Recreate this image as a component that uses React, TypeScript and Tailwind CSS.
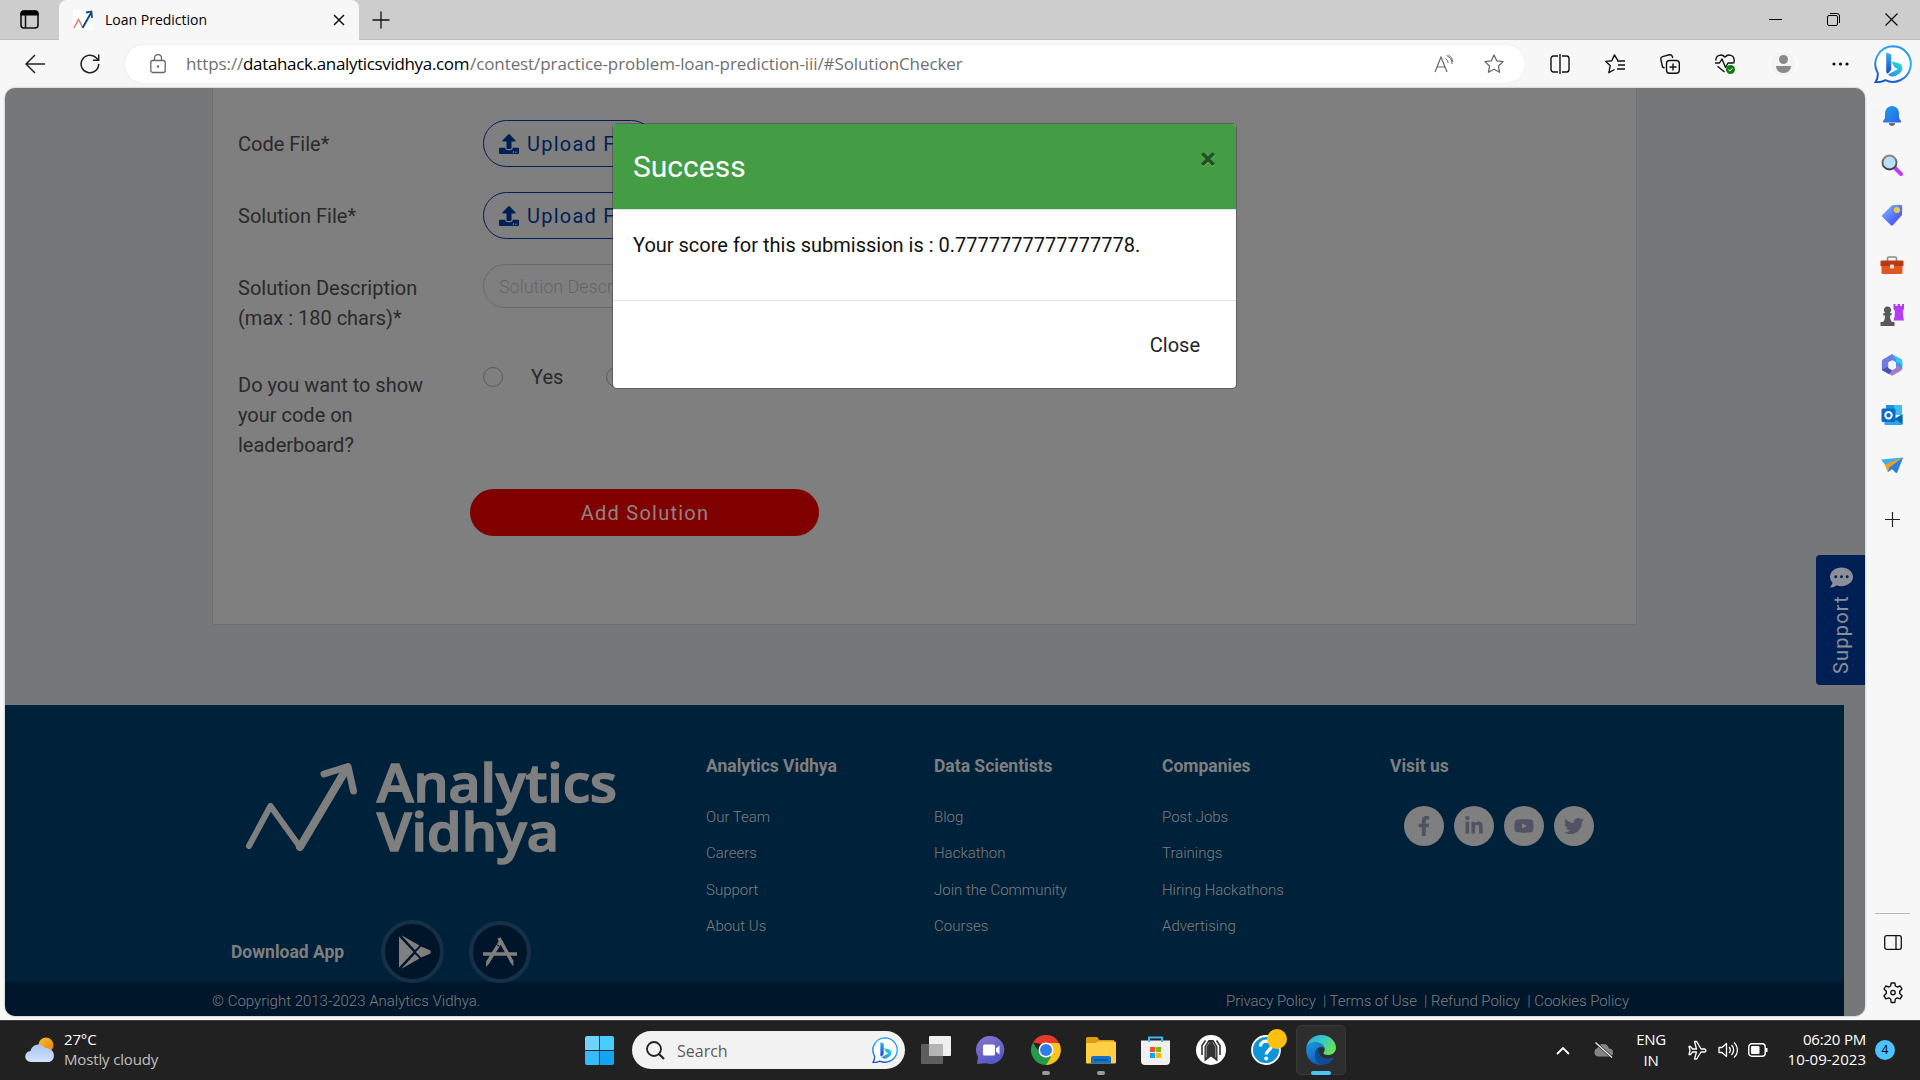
import React from "react";
import {
  FaFacebookF,
  FaLinkedinIn,
  FaTwitter,
  FaUpload,
  FaYoutube,
  FaCommentDots,
} from "react-icons/fa";

type SvgProps = {
  w?: number;
  h?: number;
  box?: string;
  className?: string;
  children: React.ReactNode;
};

function Svg({ w = 20, h = 20, box = "0 0 20 20", className = "", children }: SvgProps) {
  return (
    <svg width={w} height={h} viewBox={box} className={`block shrink-0 ${className}`} fill="none">
      {children}
    </svg>
  );
}

function BingMark({ size, id }: { size: number; id: string }) {
  return (
    <Svg w={size} h={size} box="0 0 38 38">
      <defs>
        <linearGradient id={id + "r"} x1="0.7" y1="0" x2="0.3" y2="1">
          <stop offset="0" stopColor="#2f8df0" />
          <stop offset="0.35" stopColor="#27b6ee" />
          <stop offset="1" stopColor="#1b4fd0" />
        </linearGradient>
        <linearGradient id={id + "b"} x1="0" y1="0" x2="0" y2="1">
          <stop offset="0" stopColor="#35b0f5" />
          <stop offset="1" stopColor="#1a47d2" />
        </linearGradient>
        <linearGradient id={id + "c"} x1="0" y1="1" x2="1" y2="0">
          <stop offset="0" stopColor="#2f86f0" />
          <stop offset="1" stopColor="#25e0d0" />
        </linearGradient>
      </defs>
      <path
        d="M19 1.2a17.8 17.8 0 1 1-7.6 33.9c-3.2 1.7-6.400 2.300-9.800 2 1.900-3.200 2.600-6.300 2.100-9.300A17.800 17.800 0 0 1 19 1.200z"
        fill="#fff"
        stroke={`url(#${id}r)`}
        strokeWidth="2"
      />
      <path d="M17.500 16.500l3 5.800 3.300 1.600c-2.200 1.300-7 3.900-9.800 5.800 2.500 2.500 6 2.400 9 .6 2.600-1.600 5.400-3.500 5.400-7.200 0-2.600-1.600-4.300-4-5.100z" fill={`url(#${id}c)`} />
      <path d="M12.200 7.500l4.200 1.600c.6.2.8.6.8 1.200v14.500l-3.300 4c-1.100-.5-1.700-1.400-1.700-2.800z" fill={`url(#${id}b)`} />
    </Svg>
  );
}

function TitleBar() {
  return (
    <header className="flex h-10 shrink-0 bg-[#cdcdcd]">
      <div className="flex w-[59px] items-center border-b border-[#bdbdbd] pl-[20px]">
        <Svg w={19} h={19} box="0 0 19 19">
          <rect x="1" y="1" width="17" height="17" rx="3" stroke="#111" strokeWidth="1.600" />
          <path d="M1 5V3.500A2.500 2.500 0 0 1 3.500 1h12A2.500 2.500 0 0 1 18 3.500V5z" fill="#000" stroke="#000" />
          <path d="M5.500 5v13" stroke="#111" strokeWidth="1.500" />
        </Svg>
      </div>
      <div className="flex w-[300px] items-center rounded-t-lg bg-[#f7f7f7] pr-[14px] pl-[14px]">
        <Svg className="bg-white">
          <path d="M1 18L5.500 9.500 9.500 17" stroke="#e07a5f" strokeWidth="1.500" />
          <path d="M9.500 18L18 3" stroke="#164a80" strokeWidth="2" />
          <path d="M13 2.500L18.500 1.500 19 8" stroke="#164a80" strokeWidth="1.800" />
        </Svg>
        <span className="mb-0.5 ml-3 grow text-[14px] text-black">Loan Prediction</span>
        <Svg w={12} h={12} box="0 0 12 12">
          <path d="M1 1l10 10M11 1L1 11" stroke="#111" strokeWidth="1.500" />
        </Svg>
      </div>
      <div className="flex grow items-center border-b border-[#bdbdbd] pl-[13px]">
        <Svg w={18} h={18} box="0 0 18 18">
          <path d="M9 .5v17M.5 9h17" stroke="#111" strokeWidth="1.300" />
        </Svg>
        <div className="ml-auto flex items-center gap-[45px] pr-[22px]">
          <Svg w={13} h={13} box="0 0 13 13">
            <path d="M0 6.500h13" stroke="#000" />
          </Svg>
          <Svg w={13} h={13} box="0 0 13 13">
            <rect x=".5" y="2.500" width="10" height="10" rx="1.500" stroke="#000" />
            <path d="M3 .5h7a2.500 2.500 0 0 1 2.500 2.500v7" stroke="#000" />
          </Svg>
          <Svg w={13} h={13} box="0 0 13 13">
            <path d="M.5.5l12 12M12.500.5l-12 12" stroke="#000" strokeWidth="1.100" />
          </Svg>
        </div>
      </div>
    </header>
  );
}

function Toolbar() {
  return (
    <div className="flex h-12 shrink-0 items-center">
      <div className="flex w-[125px] gap-[34px] pl-[25px]">
        <Svg>
          <path d="M10 1L1 10l9 9M1 10h19" stroke="#222" strokeWidth="1.500" />
        </Svg>
        <Svg className="ml-px">
          <path d="M18.700 10A8.800 8.800 0 1 1 15.500 3.200L18.500 6M18.700 0.500V6.200H13" stroke="#222" strokeWidth="1.500" />
        </Svg>
      </div>
      <div className="flex h-[38px] w-[1400px] items-center rounded-full bg-white pr-[21px] pl-[25px] shadow-[0_0_3px_rgba(0,0,0,0.08)]">
        <Svg w={16} h={20} box="0 0 16 20">
          <rect x=".8" y="6.500" width="14.400" height="12" rx="2" stroke="#666" strokeWidth="1.300" />
          <path d="M4.500 6.500V4a3.500 3.500 0 0 1 7 0v2.500" stroke="#666" strokeWidth="1.300" />
          <circle cx="8" cy="12.500" r="1.200" fill="#666" />
        </Svg>
        <div className="ml-[20px] flex grow text-[17px] whitespace-nowrap text-[#6f6f6f]">
          <span className="w-[57px] tracking-[-0.1px]">https://</span>
          <span className="w-[227px] tracking-[-0.34px] text-black">datahack.analyticsvidhya.com</span>
          <span className="tracking-[-0.09px]">/contest/practice-problem-loan-prediction-iii/#SolutionChecker</span>
        </div>
        <div className="flex items-center gap-[30px]">
          <Svg>
            <path d="M1 18L7 3l6 15M3 13h8" stroke="#666" strokeWidth="1.200" />
            <path d="M11.500 4.500a6 6 0 0 1 2.700 4.500M12.500 1.500a9 9 0 0 1 5.500 8.500M14.500.8a11 11 0 0 1 4.500 7" stroke="#666" />
          </Svg>
          <Star color="#666" />
        </div>
      </div>
      <div className="flex items-center gap-[35px] pl-[25px]">
        <Svg>
          <path d="M8 2H3.500A2.500 2.500 0 0 0 1 4.500v11A2.500 2.500 0 0 0 3.500 18H8M12 2h4.500A2.500 2.500 0 0 1 19 4.500v11a2.500 2.500 0 0 1-2.500 2.500H12M10 0v20" stroke="#111" strokeWidth="1.400" />
        </Svg>
        <Svg>
          <path d="M13 6.800L9.500.9 6.800 6.800.8 7.400l4.400 4.100-1.300 7.200 5.600-3.200" stroke="#111" strokeWidth="1.400" strokeLinejoin="round" />
          <path d="M12 7h8M13 11h7M12 15h8" stroke="#111" strokeWidth="1.400" />
        </Svg>
        <Svg>
          <rect x="6.500" y="6.500" width="12.800" height="12.800" rx="3" stroke="#111" strokeWidth="1.400" />
          <path d="M13 9.500v7M9.500 13h7" stroke="#111" strokeWidth="1.400" />
          <path d="M4.500 14L2.500 13 .9 5.500A2.500 2.500 0 0 1 2.600 2.600L9.300.8a2.500 2.500 0 0 1 3 1.700l.4 1.500" stroke="#111" strokeWidth="1.400" />
        </Svg>
        <Svg>
          <path d="M10 3.200C7-.5.8.8.8 6.500M10 3.200C13-.5 19.200.8 19.200 6.500c0 1-.2 2-.7 3M2.500 12.200L9.500 18" stroke="#111" strokeWidth="1.400" />
          <path d="M0 9h4.500L7 5l3.500 8.500L13 9h5" stroke="#111" strokeWidth="1.400" strokeLinejoin="round" />
          <circle cx="15.500" cy="15.500" r="4.500" fill="#107c10" />
          <path d="M13.500 15.700l1.400 1.300 2.500-2.700" stroke="#fff" />
        </Svg>
        <div className="-ml-px flex size-7 flex-col items-center justify-center gap-[2px] rounded-full border border-white bg-[#f4f4f4]">
          <div className="size-[9px] rounded-full bg-[#8a8a8a]" />
          <div className="h-[7px] w-[15px] rounded-t-[3px] rounded-b-full bg-[#8a8a8a]" />
        </div>
        <Svg w={17} h={4} box="0 0 17 4">
          <circle cx="2" cy="2" r="1.600" fill="#111" />
          <circle cx="8.500" cy="2" r="1.600" fill="#111" />
          <circle cx="15" cy="2" r="1.600" fill="#111" />
        </Svg>
      </div>
    </div>
  );
}

function Star({ color }: { color: string }) {
  return (
    <Svg>
      <path
        d="M10 1l2.700 5.800 6.400.8-4.700 4.400 1.200 6.300L10 15.200l-5.600 3.100L5.600 12 .9 7.600l6.400-.8z"
        stroke={color}
        strokeWidth="1.300"
        strokeLinejoin="round"
      />
    </Svg>
  );
}

function EdgeSidebar() {
  return (
    <aside className="flex w-[55px] shrink-0 flex-col items-center pt-[5px]">
      <BingMark size={38} id="side" />
      <div className="mt-[22px] flex flex-col items-center gap-7 pr-px">
        <Svg w={22} h={22} box="0 0 22 22">
          <defs>
            <linearGradient id="bell" x1="0" y1="0" x2="1" y2="1">
              <stop offset="0" stopColor="#1fa3ea" />
              <stop offset="1" stopColor="#2a62ea" />
            </linearGradient>
          </defs>
          <path d="M8 18h6a3 3 0 0 1-6 0z" fill="#6b6b6b" />
          <path d="M11 1a7 7 0 0 1 7 7v5l2 3.200a.8.8 0 0 1-.7 1.300H2.700A.8.800 0 0 1 2 16.200L4 13V8a7 7 0 0 1 7-7z" fill="url(#bell)" />
        </Svg>
        <Svg w={22} h={22} box="0 0 22 22" className="-mt-px mr-px">
          <defs>
            <linearGradient id="lensRing" x1="0" y1="0" x2="0" y2="1">
              <stop offset="0" stopColor="#8a8a8a" />
              <stop offset="1" stopColor="#3c3c3c" />
            </linearGradient>
          </defs>
          <path d="M14 14l6 6" stroke="#c23cf5" strokeWidth="4" strokeLinecap="round" />
          <circle cx="8.500" cy="8.500" r="7" fill="#b9e0f7" stroke="url(#lensRing)" strokeWidth="1.900" />
        </Svg>
        <Svg w={22} h={22} box="0 0 22 22">
          <defs>
            <linearGradient id="tag" x1="0" y1="0" x2="1" y2="1">
              <stop offset="0" stopColor="#7fc0ff" />
              <stop offset="1" stopColor="#3a3af5" />
            </linearGradient>
          </defs>
          <path d="M11 1.200L19 .8A2 2 0 0 1 21.200 3l-.2 8-9 10a1.600 1.600 0 0 1-2.300 0L1.500 13a1.500 1.500 0 0 1 0-2.200z" fill="url(#tag)" />
          <circle cx="16" cy="6" r="2.200" fill="#c9c9a0" stroke="#f5cf1c" strokeWidth="1.700" />
        </Svg>
        <Svg w={24} h={22} box="0 0 24 22">
          <path d="M7.500 7V4.500A1.500 1.500 0 0 1 9 3h6a1.500 1.500 0 0 1 1.500 1.500V7" stroke="#8b8b8b" strokeWidth="1.600" />
          <rect x="1.500" y="9" width="21" height="11" rx="1.500" fill="#df5722" />
          <path d="M1.500 6.500h21A1 1 0 0 1 23.500 7.500V12H.5V7.500A1 1 0 0 1 1.500 6.500z" fill="#b93a10" />
          <rect x="10" y="10.500" width="4" height="4" rx="1" fill="#ddd" />
        </Svg>
        <Svg w={24} h={24} box="0 0 24 24" className="-my-px">
          <path d="M13.500 1h2v2h2V1h2.500v2h2V1H24v5l-1.200 2 .5 6 .7 3.500H13.500l1-3.500.5-6-1.500-2z" fill="#b43cf5" />
          <path d="M7.500 3.500a3.700 3.700 0 0 1 2.300 6.600h1.700v2.400H10c0 3 .5 5 2 6.500h2.500V23H.5v-4H3c1.500-1.500 2-3.500 2-6.500H3.300v-2.400H5.200a3.700 3.700 0 0 1 2.300-6.600z" fill="#595959" />
        </Svg>
        <Svg w={22} h={22} box="0 0 22 22">
          <path d="M11 .3l8.500 4.500A3 3 0 0 1 21.300 7.500V15L15 11.500V8.300L11 6 7 8.200V2.600z" fill="#2f9cf0" />
          <path d="M11 .3L2.500 4.900A3 3 0 0 0 .8 7.500v8L7.200 12V8.200L15 4z" fill="#6e7ce0" />
          <path d="M.8 14.500a3 3 0 0 0 1.700 2.600L11 21.800l8.500-4.700a3 3 0 0 0 1.800-2.600L15 11v3L11 16.200z" fill="#a47ad6" />
          <path d="M.8 15.500L7.200 12v2l3.800 2.200-3 3.800-5.500-2.900a3 3 0 0 1-1.700-1.600z" fill="#4652b8" />
          <path d="M11 .3l8.500 4.500A3 3 0 0 1 21.300 7.500V11L15 7.500V5z" fill="#41c4f4" />
        </Svg>
        <Svg w={22} h={22} box="0 0 22 22">
          <rect x="5" y="1" width="16" height="10" rx="1" fill="#3dbdf2" />
          <path d="M5 1h8v8H5z" fill="#1796de" />
          <path d="M21.500 10v10a1 1 0 0 1-1 1H4.500a1 1 0 0 1-1-1V10l9.500 5z" fill="#28a8ea" />
          <path d="M21.500 10.500V20l-8-5z" fill="#0c62a8" />
          <rect x=".5" y="4.500" width="14" height="13.500" rx="1.500" fill="#0a6cc8" />
          <circle cx="7.500" cy="11.200" r="3.200" stroke="#fff" strokeWidth="2" />
        </Svg>
        <Svg w={22} h={22} box="0 0 22 22">
          <path d="M0 5.500L22 3.500 16 19 11 15 7 18 5 12z" fill="#38b0f0" />
          <path d="M22 3.500L3.500 10.500 7 18l1.500-4.500z" fill="#f0a020" />
          <path d="M22 3.500L8.500 13.500 7 18l4-3 4 4 1-.5z" fill="#2b7fe4" />
        </Svg>
      </div>
      <Svg w={15} h={15} box="0 0 15 15" className="mt-[36px] mr-px">
        <path d="M7.500 0v15M0 7.500h15" stroke="#222" strokeWidth="1.200" />
      </Svg>
      <div className="mt-auto mb-[21px] h-px w-[35px] bg-[#b8b8b8]" />
      <Svg w={18} h={15} box="0 0 18 15">
        <rect x=".7" y=".7" width="16.600" height="13.600" rx="2" stroke="#111" strokeWidth="1.300" />
        <path d="M12 1v13" stroke="#111" strokeWidth="1.300" />
      </Svg>
      <Svg w={22} h={22} box="0 0 22 22" className="mt-[32px] mb-[16px]">
        <path
          d="M9.200 1h3.600l.6 3 1.800 1 3-1 1.800 3-2.300 2.200v2.200L20 13.800l-1.800 3.100-3-1-1.800 1.100-.6 3.500H9.200l-.6-3.500-1.800-1.100-3 1L2 13.800l2.300-2.400V9.200L2 7l1.800-3 3 1 1.800-1z"
          stroke="#111"
          strokeWidth="1.400"
          strokeLinejoin="round"
        />
        <circle cx="11" cy="10.600" r="2.200" stroke="#111" strokeWidth="1.400" />
      </Svg>
    </aside>
  );
}

function UploadButton() {
  return (
    <div className="flex h-[47px] w-[172px] items-center rounded-full border border-[#002055] pl-[15px] text-[20px] tracking-[1.250px] whitespace-nowrap text-[#002055]">
      <FaUpload className="mr-2 size-5 shrink-0" />
      Upload File
    </div>
  );
}

function SolutionForm() {
  return (
    <section className="ml-[207px] h-[537px] w-[1425px] border border-t-0 border-[#6e6f70] bg-[#7f7f7f] pt-8 pl-[25px] text-[20px] leading-[30px] text-[#2a2a2a]">
      <div className="flex h-[72px]">
        <div className="w-[245px] pt-[9px]">Code File*</div>
        <UploadButton />
      </div>
      <div className="flex h-[72px]">
        <div className="w-[245px] pt-[9px]">Solution File*</div>
        <UploadButton />
      </div>
      <div className="flex h-[103px]">
        <div className="w-[245px] pt-[9px]">
          Solution Description
          <br />
          (max : 180 chars)*
        </div>
        <div className="flex h-11 w-[349px] items-center rounded-full border border-[#696a6b] pt-px pl-[15px] text-[18px] font-light tracking-[-0.05px] text-[#626568]">
          Solution Description
        </div>
      </div>
      <div className="flex h-[122px]">
        <div className="w-[245px] pt-[3px]">
          Do you want to show
          <br />
          your code on
          <br />
          leaderboard?
        </div>
        <div className="flex h-5 items-center">
          <span className="size-5 rounded-full border border-[#5a5a5a]" />
          <span className="ml-7 w-[75px]">Yes</span>
          <span className="size-5 rounded-full border border-[#5a5a5a]" />
          <span className="ml-7">No</span>
        </div>
      </div>
      <div className="ml-[232px] flex h-[47px] w-[349px] items-center justify-center rounded-full bg-[#800000] pl-px tracking-[1.250px] text-[#928484]">
        Add Solution
      </div>
    </section>
  );
}

function SuccessModal() {
  return (
    <div className="absolute top-[35px] left-[607px] w-[625px] rounded-[5px] border border-black/25 bg-white bg-clip-padding">
      <div className="flex h-[86px] items-start rounded-t-[4px] border-b border-[#e0e4e6] bg-[#449d44] px-5">
        <h4 className="grow pt-5 text-[30px] leading-[45px] text-white">Success</h4>
        <span className="mt-[19px] text-[30px] leading-[32px] font-bold text-[#23501f] [text-shadow:0_1px_0_#6fb56f]">×</span>
      </div>
      <p className="h-[91px] border-b border-[#dee2e6] px-5 pt-5 text-[20px] leading-[30px] text-[#111]">
        Your score for this submission is : 0.7777777777777778.
      </p>
      <div className="flex h-[87px] items-center justify-end pr-9 text-[20px] text-[#212529]">Close</div>
    </div>
  );
}

const footerColumns = [
  { title: "Analytics Vidhya", links: ["Our Team", "Careers", "Support", "About Us"] },
  { title: "Data Scientists", links: ["Blog", "Hackathon", "Join the Community", "Courses"] },
  { title: "Companies", links: ["Post Jobs", "Trainings", "Hiring Hackathons", "Advertising"] },
];

const socials = [FaFacebookF, FaLinkedinIn, FaYoutube, FaTwitter];

function Footer() {
  return (
    <footer className="mt-20 w-[1839px] text-[#7f7f7f]">
      <div className="flex h-[277px] bg-[#00213a] pl-[226px]">
        <div className="w-[475px]">
          <svg width="380" height="115" viewBox="0 0 380 115" className="mt-[55px] ml-[10px] block overflow-visible" fill="none">
            <path d="M8 86L29.500 46 59 87 104 9" stroke="#7f7f7f" strokeWidth="6" strokeLinecap="round" strokeLinejoin="round" />
            <path d="M59 87L106 8" stroke="#7f7f7f" strokeWidth="8" strokeLinecap="round" />
            <path d="M83 14L107 6.500 112.500 31" stroke="#7f7f7f" strokeWidth="7" strokeLinecap="round" strokeLinejoin="round" />
            <g className="fill-[#7f7f7f] stroke-[#7f7f7f] font-['Open_Sans'] font-semibold" strokeWidth="1.600" fontSize="52">
              <text x="136" y="41.500" textLength="240" lengthAdjust="spacingAndGlyphs">
                Analytics
              </text>
              <text x="136" y="90.500" textLength="182" lengthAdjust="spacingAndGlyphs">
                Vidhya
              </text>
            </g>
          </svg>
          <div className="mt-[45px] flex items-center">
            <span className="w-[150px] pt-0.5 text-[17.500px] font-bold">Download App</span>
            <span className="flex size-[63px] items-center justify-center rounded-full border-4 border-[#163048] bg-[#001529]">
              <Svg w={33} h={34} box="0 0 33 34" className="ml-1">
                <path d="M1 1.500v31L15.500 17zM3 0l14 15 4.500-4.500zM3 34l14-15 4.500 4.500zM23 11.500L17.800 17l5.200 5.500 8.500-3.500q2.500-2 0-4z" fill="#7f7f7f" />
              </Svg>
            </span>
            <span className="ml-[25px] flex size-[62px] items-center justify-center rounded-full border-4 border-[#163048] bg-[#001529]">
              <Svg w={34} h={30} box="0 0 34 30">
                <path d="M16 1l12.500 23M18.500 3L5 25" stroke="#7f7f7f" strokeWidth="3.500" />
                <path d="M3.200 23.500L7 25.500 3 30zM26.500 24.500l3.800-2 .2 7z" fill="#7f7f7f" />
                <path d="M0 17h34" stroke="#7f7f7f" strokeWidth="3.300" />
                <path d="M12.500 7l4 2.300" stroke="#001529" strokeWidth="1" />
              </Svg>
            </span>
          </div>
        </div>
        {footerColumns.map((column) => (
          <div key={column.title} className="w-[228px] pt-12">
            <div className="text-[17.500px] leading-[27px] font-bold">{column.title}</div>
            <ul className="mt-[19px] text-[15px] leading-[36.400px] font-light">
              {column.links.map((link) => (
                <li key={link}>{link}</li>
              ))}
            </ul>
          </div>
        ))}
        <div className="pt-12">
          <div className="text-[17.500px] leading-[27px] font-bold">Visit us</div>
          <div className="mt-[26px] ml-[14px] flex gap-[10px]">
            {socials.map((Icon, i) => (
              <span key={i} className="flex size-10 items-center justify-center rounded-full bg-[#7f7f7f]">
                <Icon className="size-5 text-[#505362]" />
              </span>
            ))}
          </div>
        </div>
      </div>
      <div className="flex h-[34px] items-center justify-between bg-[#00162b] pt-[5px] pr-[215px] pl-[207px] text-[15px] font-light">
        <span>© Copyright 2013-2023 Analytics Vidhya.</span>
        <span className="tracking-[-0.05px]">Privacy Policy&nbsp; | Terms of Use&nbsp; | Refund Policy&nbsp; | Cookies Policy</span>
      </div>
    </footer>
  );
}

function SupportTab() {
  return (
    <div className="absolute top-[467px] right-0 flex h-[130px] w-[49px] flex-col items-center justify-between rounded-l-[4px] bg-[#002055] pt-[11px] pb-[11px] text-[#8a8f99]">
      <FaCommentDots className="ml-px size-[23px]" />
      <span className="rotate-180 text-[20px] leading-none tracking-[1.200px] [writing-mode:vertical-rl]">Support</span>
    </div>
  );
}

function Cell({ children, running = false, active = false }: { children: React.ReactNode; running?: boolean; active?: boolean }) {
  return (
    <div className={`relative flex h-[50px] w-[50px] items-center justify-center rounded-[5px] ${active ? "border border-[#383838] bg-[#2d2d2d]" : ""}`}>
      {children}
      {running && (
        <span className={active ? "absolute bottom-[-1px] h-1 w-5 rounded-full bg-[#4cc2ff]" : "absolute bottom-0 h-1 w-2 rounded-full bg-[#9a9a9a]"} />
      )}
    </div>
  );
}

function Taskbar() {
  return (
    <footer className="flex h-[60px] shrink-0 items-center border-t border-[#3f3f3f] bg-[#212121] pb-px text-[15px] leading-5 text-white">
      <div className="flex w-[574px] items-center pl-[25px]">
        <Svg w={30} h={26} box="0 0 30 26">
          <defs>
            <linearGradient id="cloud" x1="0" y1="0" x2="0" y2="1">
              <stop offset="0" stopColor="#a9c4f2" />
              <stop offset="1" stopColor="#d3e2fa" />
            </linearGradient>
            <linearGradient id="sun" x1="0" y1="0" x2="1" y2="1">
              <stop offset="0" stopColor="#f5c02c" />
              <stop offset="1" stopColor="#ee7a10" />
            </linearGradient>
          </defs>
          <circle cx="21" cy="8" r="7.500" fill="url(#sun)" />
          <path d="M6 25a5.500 5.500 0 0 1-.5-11 8 8 0 0 1 14.500-3 6.500 6.500 0 0 1 4.500 1 7 7 0 0 1 0 13z" fill="url(#cloud)" />
        </Svg>
        <div className="mb-[3px] ml-[9px] tracking-[-0.15px]">
          <div>27°C</div>
          <div className="text-[#c0c0c0]">Mostly cloudy</div>
        </div>
      </div>
      <Cell>
        <div className="grid size-[29px] grid-cols-2 gap-px">
          <span className="rounded-tl-[2px] bg-[#70d4fa]" />
          <span className="rounded-tr-[2px] bg-[#48ccfa]" />
          <span className="rounded-bl-[2px] bg-[#35bdf8]" />
          <span className="rounded-br-[2px] bg-[#14a4f4]" />
        </div>
      </Cell>
      <div className="ml-[8px] flex h-[38px] w-[273px] items-center rounded-full bg-[#f2f2f2] pr-[7px] pl-[14px]">
        <Svg w={19} h={19} box="0 0 19 19">
          <circle cx="8" cy="8" r="7" stroke="#222" strokeWidth="1.800" />
          <path d="M13 13l5 5" stroke="#222" strokeWidth="2.200" />
        </Svg>
        <span className="ml-3 grow pt-px text-[16px] text-[#5c5c5c]">Search</span>
        <BingMark size={26} id="search" />
      </div>
      <div className="ml-[6px] flex gap-[5px]">
        <Cell>
          <Svg w={30} h={28} box="0 0 30 28">
            <rect x="0" y="8" width="22" height="20" rx="1" fill="#5e5e5e" />
            <rect x="8" y="0" width="22" height="20" rx="1" fill="#f0f0f0" />
            <path d="M8 8h14v12H8z" fill="#b5b5b5" />
          </Svg>
        </Cell>
        <Cell>
          <Svg w={30} h={29} box="0 0 30 29">
            <defs>
              <linearGradient id="chat" x1="0" y1="0" x2="0.500" y2="1">
                <stop offset="0" stopColor="#8a78c8" />
                <stop offset="1" stopColor="#5558c8" />
              </linearGradient>
            </defs>
            <path d="M15 0a14 14 0 1 1-5 27.300L1 28l1-7A14 14 0 0 1 15 0z" fill="url(#chat)" />
            <rect x="7" y="8.500" width="12" height="11" rx="1.500" fill="#fff" />
            <path d="M20 12.500l3.500-3v9l-3.500-3z" fill="#fff" />
          </Svg>
        </Cell>
        <Cell running>
          <Svg w={30} h={30} box="0 0 30 30">
            <path d="M2 7.500A15 15 0 0 1 28 7.500L15 10z" fill="#e33b2e" />
            <path d="M15 8h13.200A15 15 0 0 1 14.500 30l6.700-12z" fill="#fcc31e" />
            <path d="M2 7.500l6.900 11L15 22h5l-5 8A15 15 0 0 1 2 7.500z" fill="#249b4b" />
            <circle cx="15" cy="15" r="7.500" fill="#fff" />
            <circle cx="15" cy="15" r="6" fill="#2f7bea" />
          </Svg>
        </Cell>
        <Cell running>
          <Svg w={30} h={27} box="0 0 30 27">
            <path d="M0 1.500A1.500 1.500 0 0 1 1.500 0H11l2.500 3H28v4H0z" fill="#dd9e12" />
            <path d="M12 4.500h17a1 1 0 0 1 1 1v20a1 1 0 0 1-1 1H1a1 1 0 0 1-1-1V6h10z" fill="#fccf45" />
            <path d="M5 26.500V21a2 2 0 0 1 2-2h16a2 2 0 0 1 2 2v5.500z" fill="#1273c8" />
            <path d="M8.500 23h13" stroke="#0b4f98" strokeWidth="1.500" />
          </Svg>
        </Cell>
        <Cell>
          <Svg w={29} h={29} box="0 0 29 29" className="mr-px">
            <path d="M8 6V1.500h13V6" stroke="#35b8ee" strokeWidth="2" />
            <path d="M0 4.500h29V25a4 4 0 0 1-4 4H4a4 4 0 0 1-4-4z" fill="#f0f0f0" />
            <path d="M8 6V1.500M21 6V1.500" stroke="#35b8ee" strokeWidth="2" />
            <path d="M9 11h5v5H9z" fill="#f25022" />
            <path d="M15 11h5v5h-5z" fill="#7fba00" />
            <path d="M9 17h5v5H9z" fill="#00a4ef" />
            <path d="M15 17h5v5h-5z" fill="#ffb900" />
          </Svg>
        </Cell>
        <Cell>
          <Svg w={30} h={30} box="0 0 30 30">
            <circle cx="15" cy="15" r="15" fill="#fff" />
            <path d="M8.500 26.500V11.500L12.500 5h5l4 6.500v15L15 21.500z" fill="#333" />
            <path d="M10.300 22.500V12l3-4.800M19.700 22.500V12l-3-4.800" stroke="#bbb" strokeWidth=".7" />
            <path d="M6 20V10.500L9.500 5.500M24 20V10.500L20.500 5.500" stroke="#333" strokeWidth="1.600" />
          </Svg>
        </Cell>
        <Cell>
          <Svg w={30} h={30} box="0 0 30 30">
            <circle cx="15" cy="15" r="14" fill="#0f94d8" stroke="#fff" strokeWidth="1.800" />
            <path d="M9.500 11.500c0-7 11-7 11-.5 0 4-5.200 4-5.200 8.500" stroke="#fff" strokeWidth="3.200" />
            <circle cx="15.200" cy="23.500" r="2" fill="#fff" />
          </Svg>
          <span className="absolute top-1 right-1 size-5 rounded-full bg-[#ffbf10]" />
        </Cell>
        <Cell running active>
          <Svg w={30} h={30} box="0 0 30 30">
            <defs>
              <linearGradient id="edgeTop" x1="0" y1="0" x2="1" y2="0.500">
                <stop offset="0" stopColor="#2aa5e0" />
                <stop offset="0.500" stopColor="#36c6d0" />
                <stop offset="1" stopColor="#66e05a" />
              </linearGradient>
              <linearGradient id="edgeLow" x1="0" y1="0" x2="0.600" y2="1">
                <stop offset="0" stopColor="#1a9be0" />
                <stop offset="1" stopColor="#0c5bb8" />
              </linearGradient>
            </defs>
            <path d="M.3 12.500C1.500 5 7.500 0 15 0c9 0 15 6.500 15 12.500 0 5-4 7.500-8 7.500-3 0-4.500-1-4.500-2 0-.8 1.200-1.200 1.200-3.500C18.700 10 14 7.500 9.500 7.500 5.500 7.500 2 9.500.3 12.500z" fill="url(#edgeTop)" />
            <path d="M.3 12.500C2 9.500 5.500 7.500 9.500 7.500c4.500 0 9 2.500 9.200 6.500-.5-1.500-2-2-3.700-2-3.500 0-6 4-6 8 0 5 4 9 9 9.800C8 31.500-.8 24.500.3 12.500z" fill="url(#edgeLow)" />
            <path d="M12.500 13.500C10 15 9 17.500 9 20c0 5 4 9.500 9 9.800 4-.5 7.500-3 9.500-6.300.4-.8-.3-1.300-1-1-6 2.800-14 .5-14-9z" fill="#124b94" />
          </Svg>
        </Cell>
      </div>
      <div className="ml-auto flex items-center pr-[25px]">
        <Svg w={14} h={9} box="0 0 14 9">
          <path d="M1 8l6-6 6 6" stroke="#fff" strokeWidth="1.800" />
        </Svg>
        <Svg w={20} h={16} box="0 0 20 16" className="ml-[23px]">
          <path d="M4.500 14.500A4.500 4.500 0 0 1 4.500 6 6 6 0 0 1 16 6.500a4 4 0 0 1 0 8z" fill="#858585" />
          <path d="M2.500.5L19 15.500" stroke="#212121" strokeWidth="2.500" />
          <path d="M2.500.5L19 15.500" stroke="#eee" strokeWidth="1.300" />
        </Svg>
        <div className="mb-px ml-[23px] w-[30px] text-center leading-[21px] tracking-[-0.3px]">
          <div>ENG</div>
          <div>IN</div>
        </div>
        <Svg className="ml-[22px]">
          <path
            d="M1 6.500h1.500l2 2.500h4L6.500 1.500h2.200L13 9h4a1.700 1.700 0 0 1 0 3h-4l-4.300 7H6.500l2-7h-4l-2 2.500H1l1-4z"
            stroke="#fff"
            strokeWidth="1.300"
            strokeLinejoin="round"
          />
        </Svg>
        <Svg className="ml-[10px]">
          <path d="M1 7.500h3L8.500 3.500v13L4 12.500H1z" stroke="#fff" strokeWidth="1.300" strokeLinejoin="round" />
          <path d="M11 7a4 4 0 0 1 0 6M13.500 5a7 7 0 0 1 0 10M16 2.500a10 10 0 0 1 0 15" stroke="#fff" strokeWidth="1.300" />
        </Svg>
        <Svg className="ml-[10px]" h={14} box="0 0 20 14">
          <rect x=".8" y=".8" width="16.400" height="12.400" rx="3" stroke="#fff" strokeWidth="1.400" />
          <rect x="3" y="3" width="8.500" height="8" rx="1" fill="#fff" />
          <path d="M18.500 5v4" stroke="#fff" strokeWidth="2" />
        </Svg>
        <div className="mb-[3px] ml-3 w-[86px] text-right tracking-[0.02px] whitespace-nowrap">
          <div className="tracking-[-0.2px]">06:20 PM</div>
          <div>10-09-2023</div>
        </div>
        <span className="ml-[9px] flex size-5 items-center justify-center rounded-full bg-[#4cc2ff] text-[12px] text-black">4</span>
      </div>
    </footer>
  );
}

export default function App() {
  return (
    <div className="flex h-[1080px] w-[1920px] flex-col overflow-hidden bg-[#f7f7f7] font-['Open_Sans',sans-serif]">
      <TitleBar />
      <div className="flex h-[980px] shrink-0">
        <div className="flex w-[1865px] flex-col">
          <Toolbar />
          <main className="relative ml-[5px] h-[928px] overflow-hidden rounded-[10px] bg-[#767779] font-['Roboto',sans-serif] shadow-[0_0_2px_rgba(0,0,0,0.400)]">
            <SolutionForm />
            <Footer />
            <SupportTab />
            <SuccessModal />
          </main>
        </div>
        <EdgeSidebar />
      </div>
      <Taskbar />
    </div>
  );
}
